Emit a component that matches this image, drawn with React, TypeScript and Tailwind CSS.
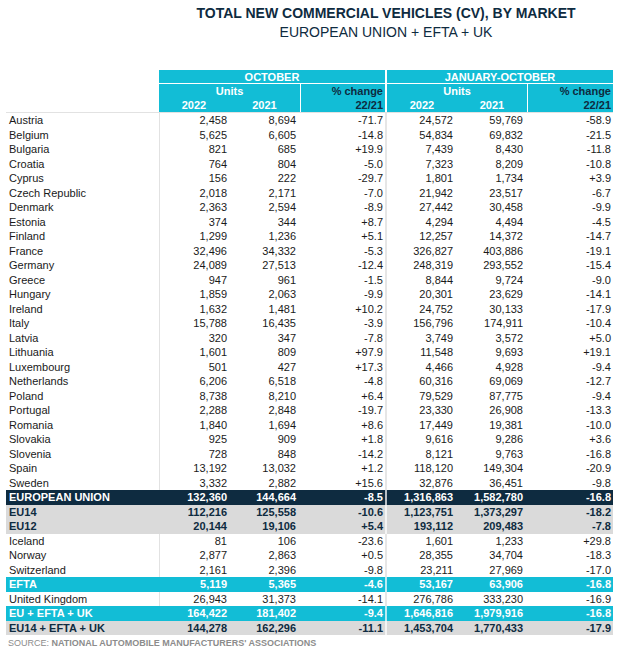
const rows: [string, string, string, string, string, string, string][] = [
  ["Austria", "2,458", "8,694", "-71.7", "24,572", "59,769", "-58.9"],
  ["Belgium", "5,625", "6,605", "-14.8", "54,834", "69,832", "-21.5"],
  ["Bulgaria", "821", "685", "+19.9", "7,439", "8,430", "-11.8"],
  ["Croatia", "764", "804", "-5.0", "7,323", "8,209", "-10.8"],
  ["Cyprus", "156", "222", "-29.7", "1,801", "1,734", "+3.9"],
  ["Czech Republic", "2,018", "2,171", "-7.0", "21,942", "23,517", "-6.7"],
  ["Denmark", "2,363", "2,594", "-8.9", "27,442", "30,458", "-9.9"],
  ["Estonia", "374", "344", "+8.7", "4,294", "4,494", "-4.5"],
  ["Finland", "1,299", "1,236", "+5.1", "12,257", "14,372", "-14.7"],
  ["France", "32,496", "34,332", "-5.3", "326,827", "403,886", "-19.1"],
  ["Germany", "24,089", "27,513", "-12.4", "248,319", "293,552", "-15.4"],
  ["Greece", "947", "961", "-1.5", "8,844", "9,724", "-9.0"],
  ["Hungary", "1,859", "2,063", "-9.9", "20,301", "23,629", "-14.1"],
  ["Ireland", "1,632", "1,481", "+10.2", "24,752", "30,133", "-17.9"],
  ["Italy", "15,788", "16,435", "-3.9", "156,796", "174,911", "-10.4"],
  ["Latvia", "320", "347", "-7.8", "3,749", "3,572", "+5.0"],
  ["Lithuania", "1,601", "809", "+97.9", "11,548", "9,693", "+19.1"],
  ["Luxembourg", "501", "427", "+17.3", "4,466", "4,928", "-9.4"],
  ["Netherlands", "6,206", "6,518", "-4.8", "60,316", "69,069", "-12.7"],
  ["Poland", "8,738", "8,210", "+6.4", "79,529", "87,775", "-9.4"],
  ["Portugal", "2,288", "2,848", "-19.7", "23,330", "26,908", "-13.3"],
  ["Romania", "1,840", "1,694", "+8.6", "17,449", "19,381", "-10.0"],
  ["Slovakia", "925", "909", "+1.8", "9,616", "9,286", "+3.6"],
  ["Slovenia", "728", "848", "-14.2", "8,121", "9,763", "-16.8"],
  ["Spain", "13,192", "13,032", "+1.2", "118,120", "149,304", "-20.9"],
  ["Sweden", "3,332", "2,882", "+15.6", "32,876", "36,451", "-9.8"],
  ["EUROPEAN UNION", "132,360", "144,664", "-8.5", "1,316,863", "1,582,780", "-16.8"],
  ["EU14", "112,216", "125,558", "-10.6", "1,123,751", "1,373,297", "-18.2"],
  ["EU12", "20,144", "19,106", "+5.4", "193,112", "209,483", "-7.8"],
  ["Iceland", "81", "106", "-23.6", "1,601", "1,233", "+29.8"],
  ["Norway", "2,877", "2,863", "+0.5", "28,355", "34,704", "-18.3"],
  ["Switzerland", "2,161", "2,396", "-9.8", "23,211", "27,969", "-17.0"],
  ["EFTA", "5,119", "5,365", "-4.6", "53,167", "63,906", "-16.8"],
  ["United Kingdom", "26,943", "31,373", "-14.1", "276,786", "333,230", "-16.9"],
  ["EU + EFTA + UK", "164,422", "181,402", "-9.4", "1,646,816", "1,979,916", "-16.8"],
  ["EU14 + EFTA + UK", "144,278", "162,296", "-11.1", "1,453,704", "1,770,433", "-17.9"],
];

// row styling per summary label
const rowStyle: Record<string, string> = {
  "EUROPEAN UNION": "bg-[#0e2b40] text-white font-bold",
  EU14: "bg-[#dadada] text-[#0e2b40] font-bold",
  EU12: "bg-[#dadada] text-[#0e2b40] font-bold",
  EFTA: "bg-[#12bdd6] text-white font-bold",
  "EU + EFTA + UK": "bg-[#12bdd6] text-white font-bold",
  "EU14 + EFTA + UK": "bg-[#dadada] text-[#0e2b40] font-bold",
};

const cols = "grid grid-cols-[153px_70px_71px_85px_72px_70px_86px]";

export default function App() {
  return (
    <div className="w-[622px] h-[656px] bg-white font-['Liberation_Sans',Arial,sans-serif] text-[#1a1a1a]">
      <div className="pl-[159px] w-[613px] pt-[4px] text-center">
        <h1 className="text-[14px] leading-[19px] font-bold text-[#0e2b40]">
          TOTAL NEW COMMERCIAL VEHICLES (CV), BY MARKET
        </h1>
        <p className="text-[14px] leading-[19px] text-[#0e2b40]">EUROPEAN UNION + EFTA + UK</p>
      </div>

      <div className="ml-[6px] mt-[28px] w-[607px] text-[11px]">
        {/* header */}
        <div className={`${cols} font-bold text-white leading-[14px]`}>
          <div className="row-span-3" />
          <div className="col-span-3 bg-[#12bdd6] text-center h-[14px] border-b border-white">OCTOBER</div>
          <div className="col-span-3 bg-[#12bdd6] text-center h-[14px] border-b border-white border-l-2">
            JANUARY-OCTOBER
          </div>
          <div className="col-span-2 bg-[#12bdd6] text-center h-[14px]">Units</div>
          <div className="bg-[#12bdd6] text-right pr-[2px] text-[#0e2b40] h-[14px] border-l border-white">% change</div>
          <div className="col-span-2 bg-[#12bdd6] text-center h-[14px] border-l-2 border-white">Units</div>
          <div className="bg-[#12bdd6] text-right pr-[2px] text-[#0e2b40] h-[14px] border-l border-white">% change</div>
          <div className="bg-[#12bdd6] text-center h-[14px]">2022</div>
          <div className="bg-[#12bdd6] text-center h-[14px]">2021</div>
          <div className="bg-[#12bdd6] text-right pr-[2px] text-[#0e2b40] h-[14px] border-l border-white">22/21</div>
          <div className="bg-[#12bdd6] text-center h-[14px] border-l-2 border-white">2022</div>
          <div className="bg-[#12bdd6] text-center h-[14px]">2021</div>
          <div className="bg-[#12bdd6] text-right pr-[2px] text-[#0e2b40] h-[14px] border-l border-white">22/21</div>
        </div>

        {/* body */}
        <div className="border-t border-[#e2e2e2]">
          {rows.map((r) => {
            const s = rowStyle[r[0]];
            return (
              <div key={r[0]} className={`${cols} h-[14.5px] leading-[14.5px] ${s ?? ""}`}>
                <div className="pl-[3px] whitespace-nowrap">{r[0]}</div>
                <div className={`text-right pr-[2px] ${s ? "" : "border-l border-[#e2e2e2]"}`}>{r[1]}</div>
                <div className="text-right pr-[4px]">{r[2]}</div>
                <div className="text-right pr-[2px]">{r[3]}</div>
                <div className={`text-right pr-[4px] border-l-2 ${s ? "border-white/70" : "border-[#e6e6e6]"}`}>{r[4]}</div>
                <div className="text-right pr-[4px]">{r[5]}</div>
                <div className="text-right pr-[2px]">{r[6]}</div>
              </div>
            );
          })}
        </div>
        <p className="mt-[2px] pl-[2px] text-[9px] leading-[12px] text-[#8c8c8c]">
          SOURCE: <span className="font-bold">NATIONAL AUTOMOBILE MANUFACTURERS' ASSOCIATIONS</span>
        </p>
      </div>
    </div>
  );
}
